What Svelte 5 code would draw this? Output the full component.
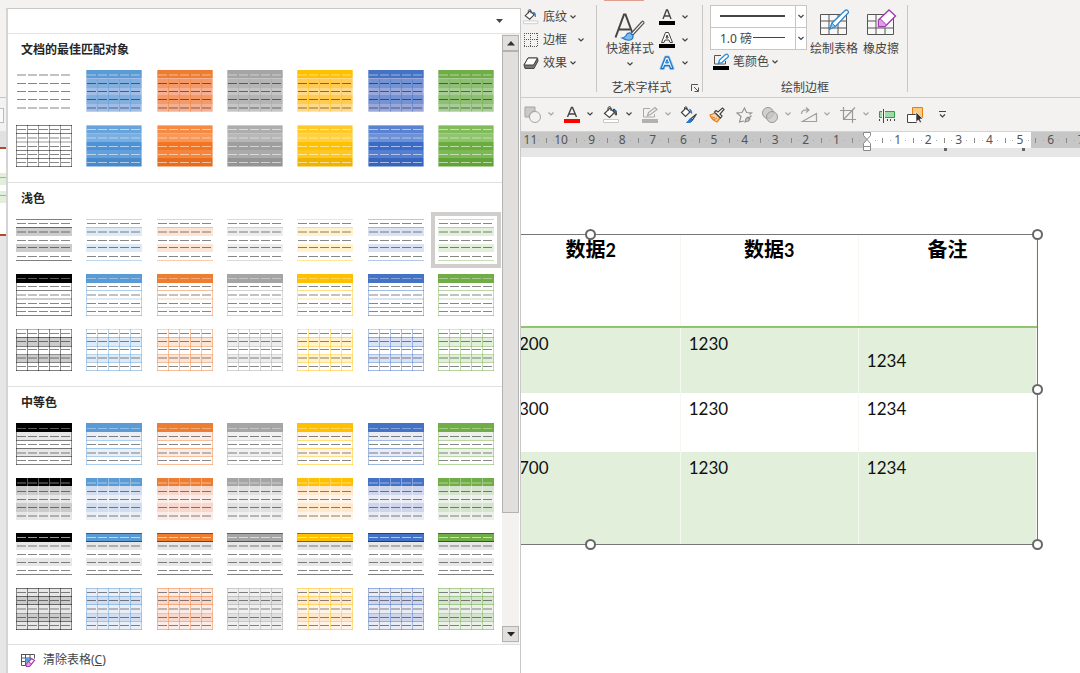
<script lang="ts">
  type Theme = { base: string; sat: string; s1: string; s2: string; a: string; b: string };
  type Shape = { x: number; y: number; w: number; h: number; f: string; o: number };

  const themes: Theme[] = [
    { base: '#000000', sat: '#000000', s1: '#ffffff', s2: '#ffffff', a: '#cbcbcb', b: '#e7e7e7' },
    { base: '#5b9bd5', sat: '#4c92d6', s1: '#83afdf', s2: '#9fbde6', a: '#d2deef', b: '#eaeff7' },
    { base: '#ed7d31', sat: '#f57420', s1: '#f39a68', s2: '#f6af90', a: '#f8d7cd', b: '#fcece8' },
    { base: '#a5a5a5', sat: '#9e9e9e', s1: '#b5b5b5', s2: '#c5c5c5', a: '#e1e1e1', b: '#f0f0f0' },
    { base: '#ffc000', sat: '#ffc000', s1: '#ffcb52', s2: '#ffd888', a: '#ffe8cb', b: '#fff4e7' },
    { base: '#4472c4', sat: '#3b6bc8', s1: '#7593d3', s2: '#98a8da', a: '#cfd5ea', b: '#e9ebf5' },
    { base: '#70ad47', sat: '#69ae3c', s1: '#8fbf74', s2: '#a6cd93', a: '#d5e3cf', b: '#ebf1e9' }
  ];

  const sections = [
    { title: '文档的最佳匹配对象', styles: ['themed', 'gradient'] },
    { title: '浅色', styles: ['light1', 'light2', 'light3'] },
    { title: '中等色', styles: ['medium1', 'medium2', 'medium3', 'medium4'] }
  ];

  let selected = $state('light1-6');

  // Builds the little 5x5 table preview, 56 by 42 units
  function preview(style: string, i: number): Shape[] {
    const t = themes[i];
    const out: Shape[] = [];
    const rect = (x: number, y: number, w: number, h: number, f: string, o = 1) =>
      out.push({ x, y, w, h, f, o });
    const band = (y: number, h: number, f: string, o = 1) => rect(0, y, 56, h, f, o);
    const rule = (y: number, o = 0.5, h = 1) => rect(0, y, 56, h, t.base, o);
    const cols = (f: string, o: number, from = 0) => {
      for (const x of [11, 22, 33, 44]) rect(x, from, 1, 42 - from, f, o);
    };
    const sides = () => {
      rect(0, 0, 1, 42, t.base, 0.42);
      rect(55, 0, 1, 42, t.base, 0.42);
    };
    const dash = (y: number, f = '#000000', o = 0.47, h = 1) => {
      for (let n = 0; n < 5; n++) rect(1 + n * 11, y, 9, h, f, o);
    };
    const soft = (y: number, f = '#000000') => dash(y, f, 0.24, 2);

    if (style === 'themed') {
      if (i === 0) {
        soft(4);
        [13, 21, 29].forEach((y) => dash(y));
        soft(37);
        return out;
      }
      band(0, 8, t.base);
      band(8, 1, t.s2);
      band(9, 9, t.s1);
      band(18, 7, t.s2);
      band(25, 9, t.s1);
      band(34, 8, t.s2);
      cols(t.base, 0.5, 9);
      soft(4, '#ffffff');
      [13, 21, 29].forEach((y) => dash(y, '#000000', 0.5));
      soft(37);
      rect(0, 0, 1, 42, '#ffffff', 0.3);
      rect(55, 0, 1, 42, '#ffffff', 0.3);
      band(41, 1, '#ffffff', 0.3);
    } else if (style === 'gradient') {
      if (i === 0) {
        [0, 8, 25, 33, 41].forEach((y) => rule(y));
        rule(16, 0.2, 2);
        [4, 21, 29, 37].forEach((y) => dash(y));
        soft(12);
        cols(t.base, 0.4);
        sides();
        return out;
      }
      band(0, 42, t.sat);
      band(0, 8, '#ffffff', 0.16);
      band(8, 1, '#ffffff', 0.38);
      band(9, 8, '#ffffff', 0.26);
      band(25, 8, '#ffffff', 0.13);
      band(33, 9, '#000000', 0.06);
      band(0, 1, '#ffffff', 0.35);
      [4, 21, 29, 37].forEach((y) => dash(y, '#ffffff', 0.55));
      soft(12, '#ffffff');
      rect(0, 0, 1, 42, '#ffffff', 0.4);
      rect(55, 0, 1, 42, '#ffffff', 0.4);
      band(41, 1, '#ffffff', 0.5);
    } else if (style === 'light1') {
      band(8, 9, t.base, 0.2);
      band(25, 8, t.base, 0.2);
      [0, 8, 41].forEach((y) => rule(y, i === 0 ? 0.5 : 0.4));
      [4, 21, 28, 37].forEach((y) => dash(y));
      soft(12);
    } else if (style === 'light2') {
      band(0, 9, t.base);
      dash(4, '#ffffff', 0.35);
      [16, 33, 41].forEach((y) => rule(y));
      rule(24, 0.2, 2);
      [12, 29, 37].forEach((y) => dash(y));
      soft(20);
      sides();
    } else if (style === 'light3') {
      band(8, 9, t.base, 0.2);
      band(25, 8, t.base, 0.2);
      rule(0, 0.3);
      [8, 17, 33, 41].forEach((y) => rule(y));
      rule(25, 0.3);
      [4, 12, 20, 37].forEach((y) => dash(y));
      soft(28);
      cols(t.base, 0.45);
      sides();
    } else if (style === 'medium1') {
      band(9, 8, t.b);
      band(25, 8, t.b);
      [17, 25, 33, 41].forEach((y) => rule(y));
      sides();
      band(0, 9, t.base);
      dash(5, '#ffffff', 0.35);
      [13, 21, 37].forEach((y) => dash(y));
      soft(29);
    } else if (style === 'medium2') {
      band(0, 8, t.base);
      band(8, 9, t.a);
      band(17, 8, t.b);
      band(25, 9, t.a);
      band(34, 8, t.b);
      cols('#ffffff', 0.35);
      soft(4, '#ffffff');
      [13, 21, 29].forEach((y) => dash(y));
      soft(37);
    } else if (style === 'medium3') {
      band(0, 9, t.base);
      band(0, 1, '#000000', 0.4);
      band(8, 1, '#000000', 0.5);
      dash(4, '#ffffff', 0.6);
      band(9, 8, '#e7e7e7');
      band(25, 8, '#e7e7e7');
      soft(12);
      [21, 29, 37].forEach((y) => dash(y));
      band(41, 1, '#000000', 0.5);
    } else {
      band(0, 42, t.b);
      band(8, 9, t.a);
      band(25, 8, t.a);
      [0, 8, 16, 33, 41].forEach((y) => rule(y));
      rule(25, 0.25);
      [4, 12, 29, 37].forEach((y) => dash(y));
      soft(20);
      cols(t.base, 0.45);
      sides();
    }
    return out;
  }

  // Ruler: zero sits at 346, one unit is 30.6
  const unit = 30.6;
  const zero = 346;
  const marks = Array.from({ length: 19 }, (_, n) => n - 11);

  const rows = [
    { cells: ['200', '1230', '1234'], cls: 'first' },
    { cells: ['300', '1230', '1234'], cls: 'second' },
    { cells: ['700', '1230', '1234'], cls: 'third' }
  ];

  const tools = [
    { name: 'shapes', more: true, off: true },
    { name: 'font', more: true },
    { name: 'fill', more: true },
    { name: 'outline', more: true, off: true },
    { name: 'fillbrush', space: true },
    { name: 'painter', space: true },
    { name: 'star', off: true },
    { name: 'merge', more: true, off: true },
    { name: 'rotate', more: true, off: true },
    { name: 'crop', more: true, off: true },
    { name: 'align', space: true },
    { name: 'select', space: true },
    { name: 'overflow' }
  ];
</script>

{#snippet chevron()}
  <svg class="chevron" viewBox="0 0 10 8" width="10" height="8">
    <path d="M2.500 2.500l2.500 2.500 2.500-2.500" fill="none" stroke="currentColor" stroke-width="1.200" />
  </svg>
{/snippet}

{#snippet bucket()}
  <path d="M2.500 7.500L8 2l4.500 4.500L7.500 11.500z" fill="#fff" stroke="#444" stroke-width="1.200" />
  <path d="M6 5V1.500q1.500-2 3 0v3.500" fill="none" stroke="#444" />
  <path d="M11.500 3q3.500.5 3 6-1.500.5-1.500-1.500 0-2-1.500-2.500z" fill="#1e77c8" />
{/snippet}

{#snippet tool(name: string)}
  <svg viewBox="0 0 18 18" width="18" height="18" fill="none" stroke="#444">
    {#if name === 'shapes'}
      <path d="M1 1h10v4a6 6 0 0 0-6 6H1z" fill="#c9c9c9" stroke="#a3a3a3" />
      <circle cx="11" cy="11" r="5.500" fill="#f3f2f1" stroke="#a3a3a3" />
    {:else if name === 'font'}
      <path d="M4.500 11L8.500 1.500h1L13.500 11M6 8h6" stroke-width="1.400" />
      <path d="M1 13h16v4H1z" fill="#f00" stroke="none" />
    {:else if name === 'fill'}
      {@render bucket()}
      <path d="M1.500 13.500h15v3h-15z" fill="#fff" stroke="#c8c8c8" />
    {:else if name === 'outline'}
      <path d="M9 2.500H2.500v8.500h11V8" stroke="#a8a8a8" />
      <path d="M6.500 9.500l1-3L14 1.500l2 2-6.500 5z" stroke="#a8a8a8" stroke-width="1.200" />
      <path d="M1 13h16v4H1z" fill="#b3b0ad" stroke="none" />
    {:else if name === 'fillbrush'}
      <path d="M1.500 6.500L6 2l4 4-4.500 4.500z" fill="#fff" stroke-width="1.200" />
      <path d="M4.500 4V1.500q1.500-1.500 2.500 0V4" />
      <path d="M9.500 3q2.500.5 2.500 4.500-1.500 0-1.500-2z" fill="#1e77c8" stroke="#1e77c8" stroke-width=".5" />
      <path d="M16.500 8l-5.500 4.500 1.500 1.500z" fill="#fff" stroke-width="1.200" />
      <path d="M10 12.500l2.500 2q-1 2.500-6 2 2-1 3.500-4z" fill="#1e77c8" stroke="#1e77c8" />
    {:else if name === 'painter'}
      <path d="M7 7l-5 2q2 5 7 7l3-4z" fill="#fbd5a5" stroke="#e67e17" stroke-width="1.300" />
      <path d="M4 11l3 1M6 14l3-2" stroke="#e67e17" />
      <path d="M6.500 6l6 6 1.500-2-2-2 4-4.500-1.500-1.500L10 6 8 4.500z" fill="#fff" stroke-width="1.200" />
    {:else if name === 'star'}
      <path d="M8 15l-4.500 1L5 10.500 1 7l5-.5L8.500 2l2 4.500 5 .5-2 1.500" stroke="#949494" stroke-width="1.200" />
      <path d="M15.500 9.500L12 13M9 16l1-3.500 2-1.500 2 2-1.500 2z" fill="#c4c4c4" stroke="#949494" stroke-width="1.200" />
    {:else if name === 'merge'}
      <circle cx="7" cy="7" r="5.500" fill="#d0d0d0" stroke="#999" />
      <circle cx="11" cy="11" r="5.500" fill="#c4c4c4" fill-opacity=".7" stroke="#999" />
    {:else if name === 'rotate'}
      <path d="M2.500 15.500h14V7.500zM1.500 8q0-5 7-4M6 1.500L9 4 6 6.500" stroke="#a0a0a0" stroke-width="1.200" />
    {:else if name === 'crop'}
      <path d="M4.500 1v12.500H17M1 4.500h12.500V17M5 13L16 1.500" stroke="#999" stroke-width="1.200" />
    {:else if name === 'align'}
      <path d="M1.500 5.500h15v6h-15z" fill="#9ddba8" stroke="#2f9e48" />
      <path d="M5.500 3v14" stroke="#f3f2f1" stroke-width="3" />
      <path d="M5.500 3v14" />
      <path d="M1.500 13v2M9.500 13v2M12.500 13v2M16.500 13v2" />
    {:else if name === 'select'}
      <path d="M6.500 1.500h10v10h-10z" fill="#fcca7d" stroke="#e67e17" />
      <path d="M1.500 8.500h9v8h-9z" fill="#fff" />
      <path d="M10 6v10l2.500-2 1.500 3 1.500-1-1.500-3h3z" fill="#333" stroke="#fff" stroke-width=".6" />
    {:else}
      <path d="M5 5.500h7M6 8.500l2.500 2.500L11 8.500" stroke-width="1.200" />
    {/if}
  </svg>
{/snippet}

<div class="app">
  <aside class="sliver">
    <div class="sliver-ribbon"></div>
    <div class="sliver-tools"><span></span></div>
    <div class="sliver-ruler"></div>
    <div class="sliver-slide">
      <i></i>
      <i></i>
    </div>
  </aside>

  <div class="popup-column">
    <div class="popup">
      <div class="filter">
        <button aria-label="▾">
          <svg viewBox="0 0 8 5" width="8" height="5"><path d="M0 0h7L3.500 4z" fill="#444" /></svg>
        </button>
      </div>
      <div class="body">
        <div class="sections">
          {#each sections as section}
            <section>
              <h2>{section.title}</h2>
              <div class="grid">
                {#each section.styles as style}
                  {#each themes as _, i}
                    <button
                      class="thumb"
                      class:selected={selected === `${style}-${i}`}
                      aria-label={section.title}
                      onclick={() => (selected = `${style}-${i}`)}
                    >
                      <svg viewBox="0 0 56 42" width="56" height="42" shape-rendering="crispEdges">
                        {#each preview(style, i) as s}
                          <rect x={s.x} y={s.y} width={s.w} height={s.h} fill={s.f} fill-opacity={s.o} />
                        {/each}
                      </svg>
                    </button>
                  {/each}
                {/each}
              </div>
            </section>
          {/each}
        </div>
        <div class="scrollbar">
          <button aria-label="▲">
            <svg viewBox="0 0 8 5" width="8" height="5"><path d="M0 4.500h8L4 0z" fill="#333" /></svg>
          </button>
          <div class="handle"></div>
          <div class="track"></div>
          <button aria-label="▼">
            <svg viewBox="0 0 8 5" width="8" height="5"><path d="M0 0h8L4 4.500z" fill="#222" /></svg>
          </button>
        </div>
      </div>
      <button class="clear">
        <svg viewBox="0 0 16 14" width="16" height="14" fill="none" stroke="#555">
          <path d="M1 1.500h13.500v4M1.500 1v11.500h5M1 5h10M1 8.500h6M5.500 1v11M10 1v6" />
          <path d="M5.500 5h4.500v2l-3 2.500H5.500z" fill="#4ba3e3" stroke="none" />
          <path d="M11.500 5.500l3 2-5 6h-3l-.5-2z" fill="#fff" stroke="#a33bb0" stroke-width="1.200" />
          <path d="M8.500 8.500l3 2.500-2 2.500h-3l-.5-2z" fill="#dba0e0" stroke="#a33bb0" />
        </svg>
        <span>清除表格(<u>C</u>)</span>
      </button>
    </div>
  </div>

  <main>
    <header class="ribbon">
      <div class="group shading">
        <button class="item">
          <svg viewBox="0 0 18 18" width="16" height="16">
            {@render bucket()}
            <path d="M.5 13.500h16v3H.5z" fill="#fff" stroke="#c8c8c8" />
          </svg>
          <span>底纹</span>{@render chevron()}
        </button>
        <button class="item wide">
          <svg viewBox="0 0 16 16" width="16" height="16" fill="none" stroke="#555">
            <path d="M1 1.500h14M1 14.500h14M1.500 1v14M14.500 1v14" stroke-dasharray="1 1" />
            <path d="M1 7.500h14M7.500 1v14" stroke-dasharray="1 1" />
          </svg>
          <span>边框</span>{@render chevron()}
        </button>
        <button class="item">
          <svg viewBox="0 0 16 16" width="16" height="16" stroke="#444" stroke-linejoin="round">
            <path d="M1 10L5 3h9.500l.5 3-4 7.500H2z" fill="#777" />
            <path d="M1 10L5 3h9.500L10.500 10z" fill="#fff" />
          </svg>
          <span>效果</span>{@render chevron()}
        </button>
      </div>

      <div class="group wordart">
        <i class="tab-mark"></i>
        <div class="row">
          <button class="big">
            <svg viewBox="0 0 34 32" width="34" height="32" fill="none">
              <path d="M2.500 28.500L11 5.500h1.500L19 23M6 20.500h11" stroke="#444" stroke-width="2" />
              <path d="M29.500 12L18 24.500l2 1.500L31 14q0-2-1.500-2z" fill="#fff" stroke="#555" stroke-width="1.200" />
              <path d="M17.500 24q-3-1-4.500 2.500-1 2-4 2.500 6 3.500 9.500 1.500 2.500-2 1-4.500z" fill="#7db9ec" stroke="#1e77c8" stroke-width="1.200" />
            </svg>
            <span>快速样式</span>
            {@render chevron()}
          </button>
          <div class="stack">
            <button class="item">
              <svg viewBox="0 0 18 18" width="18" height="18" fill="none">
                <path d="M5 11L8.500 2h1L13 11M6.500 8h5" stroke="#444" stroke-width="1.400" />
                <path d="M1 13h16v4H1z" fill="#000" />
              </svg>
              {@render chevron()}
            </button>
            <button class="item">
              <svg viewBox="0 0 18 18" width="18" height="18" fill="none">
                <path d="M3.500 11.500L7.500 1.500h3L14.500 11.500h-2.500l-1-2.500H7l-1 2.500zM8 7h2.200L9 4z" fill="#fff" stroke="#444" />
                <path d="M1 13h16v4H1z" fill="#000" />
              </svg>
              {@render chevron()}
            </button>
            <button class="item">
              <svg viewBox="0 0 18 18" width="18" height="18" fill="none" stroke-linejoin="round">
                <path d="M3 14.500L7.500 3h3L15 14.500h-2.500l-1-3h-5l-1 3z" stroke="#9ccdf3" stroke-width="3" />
                <path d="M3 14.500L7.500 3h3L15 14.500h-2.500l-1-3h-5l-1 3z" fill="#fff" stroke="#1e77c8" stroke-width="1.300" />
                <path d="M7.500 9h3L9 5.500z" fill="#8cc4f0" stroke="#1e77c8" />
              </svg>
              {@render chevron()}
            </button>
          </div>
        </div>
        <footer>
          <span>艺术字样式</span>
          <button class="launcher" aria-label="艺术字样式">
            <svg viewBox="0 0 10 10" width="10" height="10" fill="none" stroke="#555">
              <path d="M1.500 8V1.500H8M4 4l4 4M8.500 4.500v4h-4" />
            </svg>
          </button>
        </footer>
      </div>

      <div class="group borders">
        <div class="row">
          <div class="pens">
            <div class="combo">
              <select aria-label="边框"><option></option></select>
              <hr />
              {@render chevron()}
            </div>
            <div class="combo thin">
              <select aria-label="磅"><option>1.0 磅</option></select>
              <hr />
              {@render chevron()}
            </div>
            <button class="item pen">
              <svg viewBox="0 0 18 18" width="18" height="18" fill="none">
                <path d="M9 2.500H2.500v8.500h11V8" stroke="#555" />
                <path d="M6.500 10.500l1-3.500 6-5.500q1.500-1 2.500.5t-.5 2.500L10 9.500z" fill="#fff" stroke="#2b8bd6" stroke-width="1.300" />
                <path d="M1 13h16v4H1z" fill="#000" />
              </svg>
              <span>笔颜色</span>{@render chevron()}
            </button>
          </div>
          <button class="big draw">
            <svg viewBox="0 0 32 28" width="32" height="28" fill="none">
              <path d="M2.500 5.500h26v20h-26zM3 12h25M3 19h25M11 6v19M20 6v19" fill="#f8f8f8" stroke="#555" />
              <path d="M12 20l2-6L27 1.500q3-1.500 3.500 2L17.500 17.500z" fill="#fff" stroke="#2b8bd6" stroke-width="1.400" />
              <path d="M12 20l2-6 3.500 3.500z" fill="#8cc4f0" stroke="#2b8bd6" />
            </svg>
            <span>绘制表格</span>
          </button>
          <button class="big">
            <svg viewBox="0 0 32 28" width="32" height="28" fill="none">
              <path d="M2.500 5.500h26v20h-26zM3 12h8M3 19h25M11 6v19M20 19v6" fill="#f8f8f8" stroke="#555" />
              <path d="M13.500 11L24 1l6.500 6L20 17.500h-6.500z" fill="#fff" stroke="#a33bb0" stroke-width="1.400" />
              <path d="M13.500 11l2-1 6 6-1.500 1.500h-6.500z" fill="#dba0e0" stroke="#a33bb0" />
            </svg>
            <span>橡皮擦</span>
          </button>
        </div>
        <footer><span>绘制边框</span></footer>
      </div>
    </header>

    <nav class="toolbar">
      {#each tools as t}
        <button class:off={t.off} class:space={t.space} aria-label={t.name}>
          {@render tool(t.name)}
          {#if t.more}{@render chevron()}{/if}
        </button>
      {/each}
    </nav>

    <svg class="ruler" width="100%" height="25">
      <rect width="100%" height="25" fill="#e6e6e6" />
      <rect width="100%" height="16" fill="#c6c6c6" />
      <rect x={zero} width="164" height="16" fill="#fff" />
      {#each marks as m}
        {#if m !== 0}
          <text x={zero + m * unit} y="12" text-anchor="middle">{Math.abs(m)}</text>
        {/if}
        <path
          d="M{Math.round(zero + (m + 0.5) * unit)}.500 6v5"
          stroke="#888"
        />
        <path d="M{Math.round(zero + (m + 0.25) * unit)} 8.500h1M{Math.round(zero + (m + 0.75) * unit)} 8.500h1" stroke="#aaa" />
      {/each}
      <path d="M342.500.5h7v3l-3.500 4 3.500 4v3h-7v-3l3.500-4-3.500-4zM342.500 14.500h7v4h-7z" fill="#fff" stroke="#8a8a8a" />
      <path d="M423 16h3v3h-3zM501 16h3v3h-3z" fill="#666" />
    </svg>

    <div class="slide">
      <div class="frame">
        <div class="clip">
          <table>
            <thead>
              <tr>
                <th>数据<span>2</span></th>
                <th>数据<span>3</span></th>
                <th>备注</th>
              </tr>
            </thead>
            <tbody>
              {#each rows as row}
                <tr class={row.cls}>
                  {#each row.cells as cell}<td>{cell}</td>{/each}
                </tr>
              {/each}
            </tbody>
          </table>
        </div>
        <b class="dot top"></b>
        <b class="dot top right"></b>
        <b class="dot middle right"></b>
        <b class="dot bottom"></b>
        <b class="dot bottom right"></b>
      </div>
    </div>
  </main>
</div>

<style>
  :global(body) {
    margin: 0;
  }

  .app {
    display: flex;
    min-height: 100vh;
    overflow: hidden;
    background: #f3f2f1;
    color: #444;
    font-family: "Noto Sans", "Noto Sans CJK SC", sans-serif;
    font-size: 12px;
    line-height: 16px;
  }

  button {
    display: flex;
    align-items: center;
    padding: 0;
    border: 0;
    background: none;
    color: inherit;
    font: inherit;
  }

  svg {
    display: block;
    flex: none;
  }

  /* what shows of the window left of the gallery */
  .sliver {
    flex: 0 0 6px;
    background: #e6e6e6;
  }

  .sliver-ribbon {
    height: 97px;
    background: #f3f2f1;
    border-bottom: 1px solid #c8c6c4;
  }

  .sliver-tools {
    height: 33px;
    padding-top: 10px;
    box-sizing: border-box;
    background: #f3f2f1;
  }

  .sliver-tools span {
    display: block;
    width: 3px;
    height: 13px;
    border: 1px solid #bbb;
    border-left: 0;
    background: #fafafa;
  }

  .sliver-ruler {
    height: 16px;
    background: #e1e1e1;
  }

  .sliver-slide {
    height: 61px;
    padding-top: 24px;
    border-top: 2px solid #b7472a;
    border-bottom: 2px solid #b7472a;
    background: #fff;
  }

  .sliver-slide i {
    display: block;
    height: 12px;
    margin-bottom: 6px;
    background: linear-gradient(#e2efdb 4px, #9fb893 4px 5px, #e2efdb 5px);
  }

  .popup-column {
    display: flex;
    flex: 0 0 515px;
    padding-top: 8px;
    box-sizing: border-box;
  }

  .popup {
    display: flex;
    flex: 1;
    flex-direction: column;
    border: 1px solid #c8c8c8;
    border-left: 2px solid #d4d4d4;
    border-bottom: 0;
    background: #fff;
  }

  .filter {
    display: flex;
    height: 24px;
    align-items: center;
    justify-content: flex-end;
    padding-right: 16px;
    border-bottom: 1px solid #e3e3e3;
  }

  .body {
    display: flex;
    border-bottom: 1px solid #e1e1e1;
  }

  .sections {
    flex: 1;
  }

  section {
    padding: 0 8px 15px;
    border-bottom: 1px solid #e1e1e1;
  }

  section:last-child {
    padding-bottom: 14px;
    border-bottom: 0;
  }

  h2 {
    margin: 0 0 4px 5px;
    color: #262626;
    font-size: 12px;
    font-weight: 700;
    line-height: 32px;
  }

  .grid {
    display: grid;
    grid-template-columns: repeat(7, 56px);
    justify-content: space-between;
    row-gap: 13px;
  }

  .thumb.selected {
    outline: 4px solid #cfcecd;
    outline-offset: 3px;
  }

  .scrollbar {
    display: flex;
    flex: 0 0 17px;
    flex-direction: column;
    padding: 1px 0 2px;
    margin-right: 1px;
    background: #f3f2f1;
  }

  .scrollbar button {
    height: 16px;
    justify-content: center;
    border: 1px solid #b4b2b0;
    background: #e1dfdd;
  }

  .scrollbar .handle {
    flex: 462;
    border: 1px solid #b4b2b0;
    background: #e1dfdd;
  }

  .scrollbar .track {
    flex: 113;
  }

  .clear {
    gap: 7px;
    height: 30px;
    padding-left: 12px;
    margin-bottom: -2px;
  }

  main {
    display: flex;
    flex: 1;
    flex-direction: column;
    min-width: 0;
  }

  .ribbon {
    display: flex;
    height: 98px;
    padding: 5px 0;
    box-sizing: border-box;
    border-bottom: 1px solid #cfcdcb;
  }

  .group {
    display: flex;
    flex-direction: column;
    border-right: 1px solid #c8c6c4;
  }

  .group .row {
    display: flex;
    flex: 1;
  }

  .group footer {
    display: flex;
    align-items: center;
    justify-content: center;
    height: 8px;
  }

  .item {
    height: 23px;
    gap: 4px;
  }

  .item .chevron {
    margin-left: -3px;
  }

  .shading {
    width: 73px;
    padding-left: 2px;
  }

  .shading .item.wide .chevron {
    margin-left: 5px;
  }

  .wordart {
    position: relative;
    width: 105px;
  }

  .tab-mark {
    position: absolute;
    top: -5px;
    left: 7px;
    width: 40px;
    height: 1px;
    background: #e0a090;
  }

  .wordart .row {
    gap: 4px;
    padding-left: 9px;
  }

  .wordart footer {
    position: relative;
    padding-right: 16px;
  }

  .launcher {
    position: absolute;
    right: 2px;
  }

  .big {
    flex-direction: column;
    align-self: flex-start;
    padding-top: 4px;
  }

  .wordart .big .chevron {
    margin-top: 3px;
  }

  .stack .item {
    gap: 7px;
  }

  .borders {
    width: 204px;
  }

  .borders .row {
    padding-left: 7px;
  }

  .borders .big {
    margin-left: 5px;
  }

  .borders .big span {
    margin-top: 4px;
  }

  .borders .big.draw {
    margin-left: 3px;
  }

  .pens {
    width: 97px;
  }

  .combo {
    position: relative;
    display: flex;
    height: 23px;
    box-sizing: border-box;
    border: 1px solid #c8c6c4;
    background: #fff;
  }

  .combo + .combo {
    height: 22px;
    border-top: 0;
  }

  .combo select {
    flex: 1;
    padding: 0 0 0 9px;
    border: 0;
    appearance: none;
    background: none;
    color: #444;
    font: inherit;
  }

  .combo .chevron {
    position: absolute;
    top: 0;
    right: 0;
    height: 100%;
    border-left: 1px solid #c8c6c4;
  }

  .combo hr {
    position: absolute;
    top: 9px;
    left: 9px;
    width: 65px;
    height: 2px;
    margin: 0;
    border: 0;
    background: #444;
  }

  .combo.thin hr {
    left: 42px;
    width: 32px;
    height: 1px;
  }

  .pen {
    gap: 3px;
    margin-left: 2px;
  }

  .pen .chevron {
    margin-left: -2px;
  }

  .toolbar {
    display: flex;
    align-items: center;
    gap: 7px;
    height: 34px;
    padding: 1px 0 0 3px;
    box-sizing: border-box;
    border-bottom: 1px solid #d5d3d1;
  }

  .toolbar button {
    gap: 4px;
  }

  .toolbar .chevron {
    margin-bottom: 3px;
  }

  .toolbar .off {
    color: #a3a3a3;
  }

  .toolbar .space {
    margin-right: 3px;
  }

  .ruler text {
    fill: #555;
    font-family: "Noto Sans", sans-serif;
    font-size: 12px;
  }

  .slide {
    flex: 1;
    padding: 77px 42px 0 0;
    background: #fff;
  }

  .frame {
    position: relative;
    border: 1px solid #777;
    border-left: 0;
  }

  .clip {
    overflow: hidden;
  }

  table {
    width: calc(100% + 19px);
    margin-left: -19px;
    border-collapse: collapse;
    table-layout: fixed;
    color: #111;
    font-family: Lato, "Noto Sans CJK SC", sans-serif;
    font-size: 17px;
    line-height: 24px;
  }

  th,
  td {
    padding: 4px 8px;
    border-right: 1px solid #f4f8f1;
    text-align: left;
    vertical-align: top;
  }

  th {
    height: 85px;
    padding-top: 2px;
    border-bottom: 2px solid #8fc36f;
    color: #000;
    font-size: 20px;
    text-align: center;
  }

  th span {
    font-size: 18px;
  }

  td:first-child {
    padding-left: 17px;
  }

  .first td {
    height: 57px;
  }

  .first td:last-child {
    vertical-align: middle;
  }

  .second td {
    height: 51px;
  }

  .third td {
    height: 84px;
  }

  .first,
  .third {
    background: #e2efdb;
  }

  .dot {
    position: absolute;
    left: 64px;
    width: 7px;
    height: 7px;
    border: 2px solid #666;
    border-radius: 50%;
    background: #fff;
  }

  .dot.right {
    right: -6px;
    left: auto;
  }

  .dot.top {
    top: -6px;
  }

  .dot.middle {
    top: calc(50% - 6px);
  }

  .dot.bottom {
    bottom: -6px;
  }
</style>
